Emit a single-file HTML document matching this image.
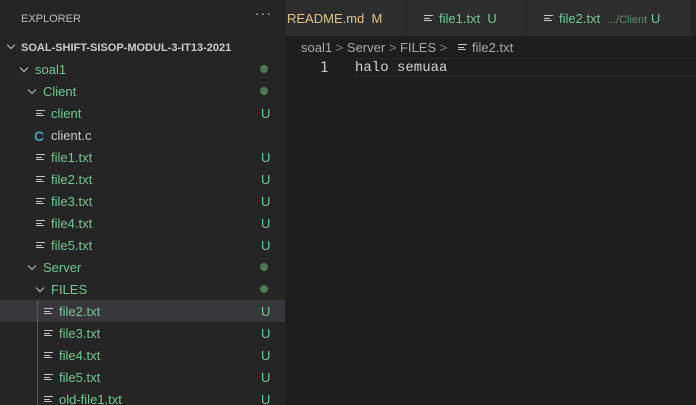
<!DOCTYPE html>
<html><head><style>
*{margin:0;padding:0;box-sizing:border-box}
html,body{width:696px;height:405px;overflow:hidden}
body{background:#1e1e1e;font-family:"Liberation Sans",sans-serif;font-size:13px;position:relative}
#side{position:absolute;left:0;top:0;width:285px;height:405px;background:#252526;overflow:hidden}
.a{position:absolute;white-space:nowrap}
.g{color:#73c991}
.row{position:absolute;left:0;width:285px;height:22px;line-height:24px}
.chev{position:absolute;top:7px;width:6px;height:6px;border-right:1.3px solid #c5c5c5;border-bottom:1.3px solid #c5c5c5;transform:rotate(45deg)}
.dot{position:absolute;left:260px;top:7px;width:8px;height:8px;border-radius:50%;background:#4c7a59}
.u{position:absolute;left:261px;color:#73c991}
.ic{position:absolute;top:8px;width:9px;height:9px}
.ic i{display:block;height:1.3px;background:#c5c5c5;margin-bottom:1.3px}
.tab{position:absolute;top:0;height:36px;background:#2d2d2d;line-height:37px}
</style></head><body>
<div id="side">
<div class="a" style="left:21px;top:13px;font-size:11px;color:#bbbbbb">EXPLORER</div>
<div class="a" style="left:255px;top:5px;font-size:14px;color:#c5c5c5;letter-spacing:1px">···</div>

<div class="row" style="top:36px"><span class="chev" style="left:8px;top:6px"></span><span class="a" style="left:21px;font-size:11px;font-weight:bold;color:#cccccc">SOAL-SHIFT-SISOP-MODUL-3-IT13-2021</span></div>
<div class="row" style="top:58px"><span class="chev" style="left:21px"></span><span class="a g" style="left:35px">soal1</span><span class="dot"></span></div>
<div class="row" style="top:80px"><span class="chev" style="left:29px"></span><span class="a g" style="left:43px">Client</span><span class="dot"></span></div>
<div class="row" style="top:102px"><span class="ic" style="left:36px"><i style="width:9px"></i><i style="width:6px"></i><i style="width:8px"></i></span><span class="a g" style="left:51px">client</span><span class="u">U</span></div>
<div class="row" style="top:124px"><span class="a" style="left:34px;color:#519aba;font-weight:bold;font-size:14px">C</span><span class="a" style="left:51px;color:#cccccc">client.c</span></div>
<div class="row" style="top:146px"><span class="ic" style="left:36px"><i style="width:9px"></i><i style="width:6px"></i><i style="width:8px"></i></span><span class="a g" style="left:51px">file1.txt</span><span class="u">U</span></div>
<div class="row" style="top:168px"><span class="ic" style="left:36px"><i style="width:9px"></i><i style="width:6px"></i><i style="width:8px"></i></span><span class="a g" style="left:51px">file2.txt</span><span class="u">U</span></div>
<div class="row" style="top:190px"><span class="ic" style="left:36px"><i style="width:9px"></i><i style="width:6px"></i><i style="width:8px"></i></span><span class="a g" style="left:51px">file3.txt</span><span class="u">U</span></div>
<div class="row" style="top:212px"><span class="ic" style="left:36px"><i style="width:9px"></i><i style="width:6px"></i><i style="width:8px"></i></span><span class="a g" style="left:51px">file4.txt</span><span class="u">U</span></div>
<div class="row" style="top:234px"><span class="ic" style="left:36px"><i style="width:9px"></i><i style="width:6px"></i><i style="width:8px"></i></span><span class="a g" style="left:51px">file5.txt</span><span class="u">U</span></div>
<div class="row" style="top:256px"><span class="chev" style="left:29px"></span><span class="a g" style="left:43px">Server</span><span class="dot"></span></div>
<div class="row" style="top:278px"><span class="chev" style="left:37px"></span><span class="a g" style="left:51px">FILES</span><span class="dot"></span></div>
<div class="row" style="top:300px;background:#37373d"><span class="ic" style="left:44px"><i style="width:9px"></i><i style="width:6px"></i><i style="width:8px"></i></span><span class="a g" style="left:59px">file2.txt</span><span class="u">U</span></div>
<div class="row" style="top:322px"><span class="ic" style="left:44px"><i style="width:9px"></i><i style="width:6px"></i><i style="width:8px"></i></span><span class="a g" style="left:59px">file3.txt</span><span class="u">U</span></div>
<div class="row" style="top:344px"><span class="ic" style="left:44px"><i style="width:9px"></i><i style="width:6px"></i><i style="width:8px"></i></span><span class="a g" style="left:59px">file4.txt</span><span class="u">U</span></div>
<div class="row" style="top:366px"><span class="ic" style="left:44px"><i style="width:9px"></i><i style="width:6px"></i><i style="width:8px"></i></span><span class="a g" style="left:59px">file5.txt</span><span class="u">U</span></div>
<div class="row" style="top:388px"><span class="ic" style="left:44px"><i style="width:9px"></i><i style="width:6px"></i><i style="width:8px"></i></span><span class="a g" style="left:59px">old-file1.txt</span><span class="u">U</span></div>
<div class="a" style="left:37px;top:300px;width:1px;height:105px;background:#585858"></div>
</div>

<div class="a" style="left:285px;top:0;width:411px;height:36px;background:#252526"></div>
<div class="tab" style="left:285px;width:121px"><span class="a" style="left:2px;color:#e2c08d">README.md&nbsp; M</span></div>
<div class="tab" style="left:407px;width:119px"><span class="ic" style="left:17px;top:15px"><i style="width:9px"></i><i style="width:6px"></i><i style="width:8px"></i></span><span class="a g" style="left:32px">file1.txt &nbsp;U</span></div>
<div class="tab" style="left:527px;width:164px"><span class="ic" style="left:17px;top:15px"><i style="width:9px"></i><i style="width:6px"></i><i style="width:8px"></i></span><span class="a g" style="left:32px">file2.txt <span style="font-size:11px;color:#5e8f6c">&nbsp;.../Client</span> U</span></div>

<div class="a" style="left:301px;top:40px;color:#a9a9a9">soal1 <span style="color:#888">&gt;</span> Server <span style="color:#888">&gt;</span> FILES <span style="color:#888">&gt;</span></div>
<span class="ic" style="left:458px;top:44px"><i style="width:9px"></i><i style="width:6px"></i><i style="width:8px"></i></span>
<div class="a" style="left:472px;top:40px;color:#a9a9a9">file2.txt</div>
<div class="a" style="left:355px;top:58px;width:341px;height:19px;border:1px solid #282828;border-right:none"></div>
<div class="a" style="left:320px;top:59px;font-family:'DejaVu Sans Mono',monospace;font-size:14px;color:#c6c6c6;line-height:18px">1</div>
<div class="a" style="left:355px;top:59px;font-family:'Liberation Mono',monospace;font-size:14px;color:#d4d4d4;line-height:18px">halo semuaa</div>
</body></html>
